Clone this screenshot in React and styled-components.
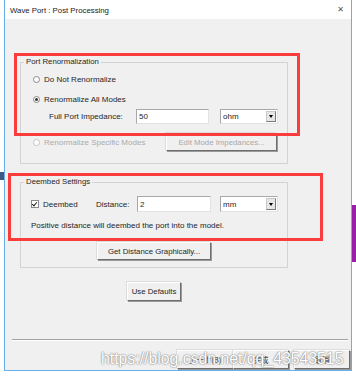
import React from "react";
import styled, { createGlobalStyle } from "styled-components";

const GlobalStyle = createGlobalStyle`
  html, body {
    margin: 0;
    padding: 0;
    background: #ffffff;
  }
  body {
    font-family: "Liberation Sans", Arial, sans-serif;
    font-size: 8px;
    color: #262626;
  }
`;

export default function App() {
  return (
    <Desktop>
      <GlobalStyle />
      <SideBar />
      <PurpleBlock />
      <Window>
        <TitleBar>
          <Title>Wave Port : Post Processing</Title>
          <CloseX>✕</CloseX>
        </TitleBar>
        <Body>
          <Group $top={38}>
            <Legend>Port Renormalization</Legend>
            <RadioRow $mt={6}>
              <Radio />
              <span>Do Not Renormalize</span>
            </RadioRow>
            <RadioRow $mt={8}>
              <Radio $checked />
              <span>Renormalize All Modes</span>
            </RadioRow>
            <FieldRow $mt={4}>
              <FieldLabel $left={28} $width={87}>Full Port Impedance:</FieldLabel>
              <TextBox $width={73}>50</TextBox>
              <Combo $ml={11}>
                <span>ohm</span>
                <ComboArrow />
              </Combo>
            </FieldRow>
            <SpecificRow>
              <RadioRow $disabled>
                <Radio $disabled />
                <span>Renormalize Specific Modes</span>
              </RadioRow>
              <Button $disabled $width={111}>Edit Mode Impedances...</Button>
            </SpecificRow>
          </Group>

          <Group $top={13} $pb={7}>
            <Legend>Deembed Settings</Legend>
            <FieldRow $mt={9} $h={16}>
              <Check />
              <DeembedLabel>Deembed</DeembedLabel>
              <FieldLabel $left={0} $width={41}>Distance:</FieldLabel>
              <TextBox $width={74} $h={16}>2</TextBox>
              <Combo $ml={9} $h={16}>
                <span>mm</span>
                <ComboArrow />
              </Combo>
            </FieldRow>
            <Note>Positive distance will deembed the port into the model.</Note>
            <CenterRow $mt={11}>
              <Button $width={114}>Get Distance Graphically...</Button>
            </CenterRow>
          </Group>

          <DefaultsRow>
            <Button $width={54} $h={19}>Use Defaults</Button>
          </DefaultsRow>

          <Separator />

          <WizardButtons>
            <Button $width={56} $h={19} $cjk>上一步(B)</Button>
            <Button $width={56} $h={19} $cjk>完成</Button>
            <Button $width={56} $h={19} $cjk $ml={5}>取消</Button>
          </WizardButtons>
        </Body>
        <RedFrame $left={9} $top={53} $width={286} $height={83} />
        <RedFrame $left={3} $top={173} $width={315} $height={68} />
        <Watermark>https://blog.csdn.net/qq_43543515</Watermark>
      </Window>
    </Desktop>
  );
}

const Desktop = styled.div`
  position: relative;
  width: 356px;
  height: 377px;
  overflow: hidden;
  background: #ffffff;
`;

const SideBar = styled.div`
  position: absolute;
  left: 0;
  top: 172px;
  width: 4px;
  height: 8px;
  background: #3b5a86;
`;

const PurpleBlock = styled.div`
  position: absolute;
  left: 352px;
  top: 205px;
  width: 4px;
  height: 57px;
  background: #9a1ea8;
`;

const Window = styled.div`
  position: relative;
  margin-left: 4px;
  width: 348px;
  height: 371px;
  box-sizing: border-box;
  border: 1px solid #6aaee6;
  border-top: none;
  background: #f0f0f0;
  display: flex;
  flex-direction: column;
  overflow: hidden;
`;

const TitleBar = styled.div`
  height: 19px;
  flex: none;
  background: #ffffff;
  display: flex;
  align-items: center;
  justify-content: space-between;
  padding: 0 7px 0 5px;
`;

const Title = styled.span`
  font-size: 7.8px;
  color: #1a1a1a;
  padding-top: 1px;
`;

const CloseX = styled.span`
  font-family: "DejaVu Sans", sans-serif;
  font-size: 8px;
  color: #555;
`;

const Body = styled.div`
  flex: 1;
  display: flex;
  flex-direction: column;
  padding-left: 15px;
`;

const Group = styled.fieldset`
  margin: ${(p) => p.$top}px 0 0 0;
  padding: 0 0 ${(p) => p.$pb ?? 12}px 0;
  width: 268px;
  box-sizing: border-box;
  border: 1px solid #d3d3d3;
  display: flex;
  flex-direction: column;
  min-width: 0;
`;

const Legend = styled.legend`
  margin-left: 3px;
  padding: 0 2px;
  line-height: 10px;
  height: 10px;
  font-size: 7.8px;
`;

const RadioRow = styled.div`
  margin-top: ${(p) => p.$mt ?? 0}px;
  height: 12px;
  display: flex;
  align-items: center;
  padding-left: 12px;
  gap: 4px;
  color: ${(p) => (p.$disabled ? "#ababab" : "inherit")};
`;

const Radio = styled.span`
  width: 7px;
  height: 7px;
  box-sizing: border-box;
  border-radius: 50%;
  border: 1px solid ${(p) => (p.$disabled ? "#c4c4c4" : "#8a8a8a")};
  background: #fff;
  display: flex;
  align-items: center;
  justify-content: center;
  &::after {
    content: "";
    width: 3px;
    height: 3px;
    border-radius: 50%;
    background: ${(p) => (p.$checked ? "#333" : "transparent")};
  }
`;

const FieldRow = styled.div`
  margin-top: ${(p) => p.$mt ?? 0}px;
  height: ${(p) => p.$h ?? 15}px;
  display: flex;
  align-items: center;
  padding-left: ${(p) => (p.$h ? 10 : 0)}px;
`;

const FieldLabel = styled.span`
  margin-left: ${(p) => p.$left}px;
  width: ${(p) => p.$width}px;
  flex: none;
`;

const DeembedLabel = styled.span`
  margin-left: 4px;
  width: 53px;
  flex: none;
`;

const Check = styled.span`
  width: 8px;
  height: 8px;
  box-sizing: border-box;
  border: 1px solid #8a8a8a;
  background: #fff;
  position: relative;
  flex: none;
  &::after {
    content: "";
    position: absolute;
    left: 1px;
    top: 0px;
    width: 2px;
    height: 4px;
    border: solid #222;
    border-width: 0 1.3px 1.3px 0;
    transform: rotate(40deg);
  }
`;

const TextBox = styled.div`
  width: ${(p) => p.$width}px;
  height: ${(p) => p.$h ?? 15}px;
  box-sizing: border-box;
  border: 1px solid #a9a9a9;
  border-right-color: #e3e3e3;
  border-bottom-color: #e3e3e3;
  background: #fff;
  padding-left: 2px;
  display: flex;
  align-items: center;
  flex: none;
`;

const Combo = styled.div`
  margin-left: ${(p) => p.$ml}px;
  width: 58px;
  height: ${(p) => p.$h ?? 15}px;
  box-sizing: border-box;
  border: 1px solid #a9a9a9;
  border-right-color: #e3e3e3;
  border-bottom-color: #e3e3e3;
  background: #fff;
  padding: 1px;
  display: flex;
  align-items: center;
  justify-content: space-between;
  flex: none;
  span {
    padding-left: 1px;
  }
`;

const ComboArrow = styled.span`
  width: 10px;
  align-self: stretch;
  box-sizing: border-box;
  background: #e6e6e6;
  border: 1px solid #c9c9c9;
  border-right-color: #7a7a7a;
  border-bottom-color: #7a7a7a;
  display: flex;
  align-items: center;
  justify-content: center;
  &&& {
    padding: 0;
  }
  &::after {
    content: "";
    border-left: 2.5px solid transparent;
    border-right: 2.5px solid transparent;
    border-top: 3px solid #000;
  }
`;

const SpecificRow = styled.div`
  margin-top: 9px;
  height: 18px;
  display: flex;
  align-items: center;
  justify-content: space-between;
  padding-right: 10px;
`;

const Button = styled.div`
  width: ${(p) => p.$width}px;
  height: ${(p) => p.$h ?? 18}px;
  margin-left: ${(p) => p.$ml ?? 0}px;
  box-sizing: border-box;
  background: #f0f0f0;
  border: 1px solid #ffffff;
  border-right-color: #6e6e6e;
  border-bottom-color: #6e6e6e;
  box-shadow: 1px 1px 0 #9a9a9a, -1px -1px 0 #dcdcdc;
  display: flex;
  align-items: center;
  justify-content: center;
  flex: none;
  font-family: ${(p) =>
    p.$cjk
      ? '"Noto Sans CJK SC", "Liberation Sans", sans-serif'
      : '"Liberation Sans", Arial, sans-serif'};
  font-size: ${(p) => (p.$cjk ? 7.5 : 7.8)}px;
  color: ${(p) => (p.$disabled ? "#a8a8a8" : "inherit")};
`;

const Note = styled.div`
  margin-top: 9px;
  height: 10px;
  line-height: 10px;
  padding-left: 10px;
`;

const CenterRow = styled.div`
  margin-top: ${(p) => p.$mt}px;
  display: flex;
  justify-content: center;
`;

const DefaultsRow = styled.div`
  margin-top: 14px;
  width: 268px;
  display: flex;
  justify-content: center;
`;

const Separator = styled.div`
  margin: 38px 0 0 -8px;
  width: 336px;
  height: 1px;
  background: #a0a0a0;
  box-shadow: 0 1px 0 #ffffff;
`;

const WizardButtons = styled.div`
  margin-top: 10px;
  display: flex;
  padding-left: 157px;
`;

const RedFrame = styled.div`
  position: absolute;
  left: ${(p) => p.$left}px;
  top: ${(p) => p.$top}px;
  width: ${(p) => p.$width}px;
  height: ${(p) => p.$height}px;
  box-sizing: border-box;
  border: 3px solid #fa3c3c;
  pointer-events: none;
`;

const Watermark = styled.div`
  position: absolute;
  left: 96px;
  top: 350px;
  font-family: "Liberation Sans", Arial, sans-serif;
  font-size: 15.8px;
  line-height: 18px;
  color: #ffffff;
  text-shadow: 0 0 2px #7a7a7a, 0 0 1px #8a8a8a;
  white-space: nowrap;
  pointer-events: none;
`;
